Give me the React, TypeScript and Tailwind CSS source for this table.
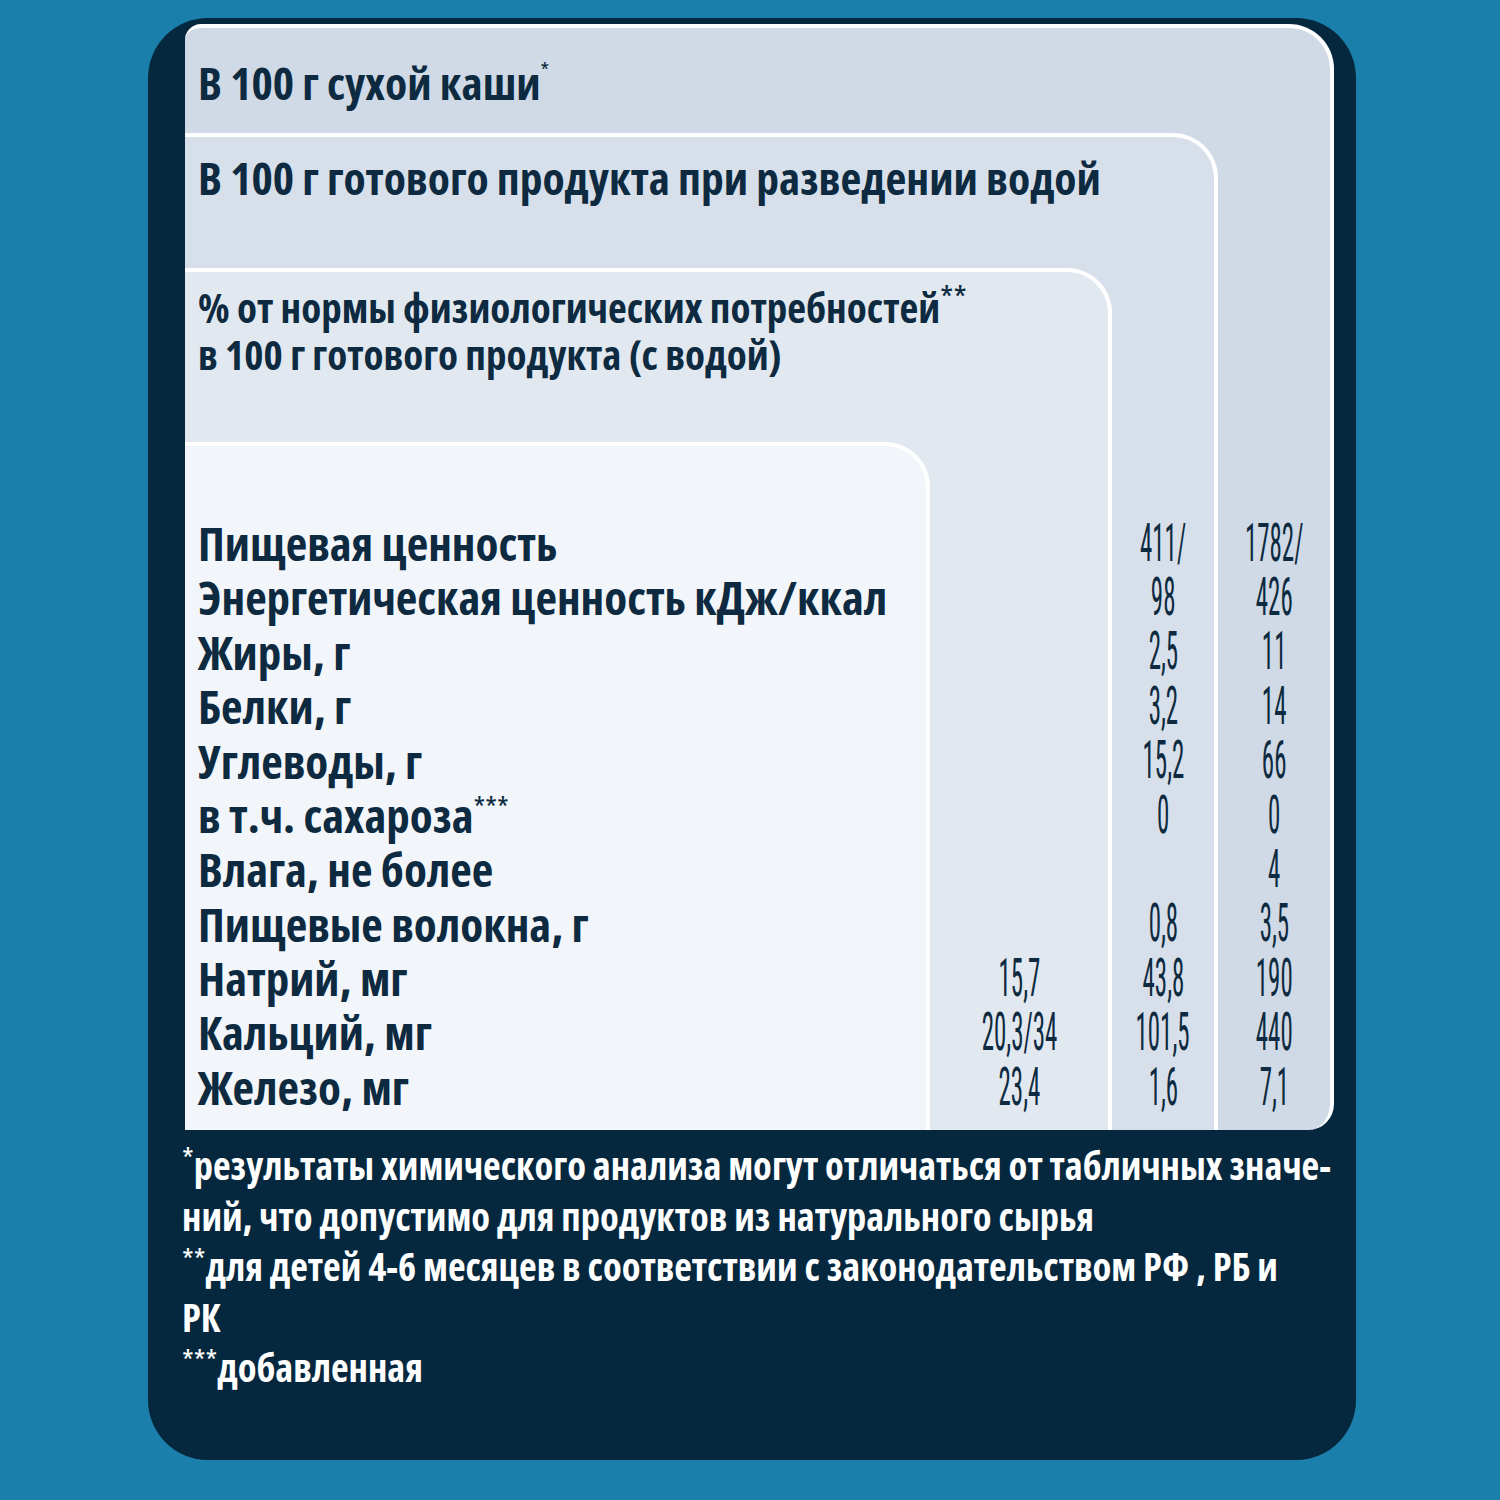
import React from 'react';

type Row = { label: React.ReactNode; pct: string; ready: string; dry: string };

const rows: Row[] = [
  { label: 'Пищевая ценность', pct: '', ready: '411/', dry: '1782/' },
  { label: 'Энергетическая ценность кДж/ккал', pct: '', ready: '98', dry: '426' },
  { label: 'Жиры, г', pct: '', ready: '2,5', dry: '11' },
  { label: 'Белки, г', pct: '', ready: '3,2', dry: '14' },
  { label: 'Углеводы, г', pct: '', ready: '15,2', dry: '66' },
  {
    label: (
      <>
        в т.ч. сахароза<sup className="text-[30px] font-normal top-[-14px]">***</sup>
      </>
    ),
    pct: '',
    ready: '0',
    dry: '0',
  },
  { label: 'Влага, не более', pct: '', ready: '', dry: '4' },
  { label: 'Пищевые волокна, г', pct: '', ready: '0,8', dry: '3,5' },
  { label: 'Натрий, мг', pct: '15,7', ready: '43,8', dry: '190' },
  { label: 'Кальций, мг', pct: '20,3/34', ready: '101,5', dry: '440' },
  { label: 'Железо, мг', pct: '23,4', ready: '1,6', dry: '7,1' },
];

const cond = "font-['Open_Sans',sans-serif] font-stretch-condensed";
const digits = "font-['Roboto',sans-serif] font-stretch-condensed";

// values are aligned to the bottom, where all panels end together
function ValueColumn({ values, width }: { values: string[]; width: string }) {
  return (
    <div className={`${width} shrink-0 flex flex-col justify-end pb-[16px] ${digits}`}>
      {values.map((v, i) => (
        <div key={i} className="h-[54.4px] flex items-center justify-center text-[53px] font-normal leading-none text-[#0d2a40]">
          <span className="inline-block scale-x-[0.47]">{v || '\u00a0'}</span>
        </div>
      ))}
    </div>
  );
}

export default function App() {
  return (
    <div className={`w-[1500px] h-[1500px] bg-[#1a80ab] pt-[18px] pl-[148px] ${cond}`}>
      <div className="w-[1208px] h-[1442px] bg-[#05283f] rounded-[60px] pt-[6px] pl-[37px] pr-[22px] flex flex-col">
        {/* dry product panel */}
        <div className="bg-[#cfdae6] border-t-4 border-r-4 border-white rounded-tl-[16px] rounded-tr-[45px] rounded-br-[26px] flex flex-col overflow-hidden">
          <div className="h-[105px] pl-[13px] pt-[29px] text-[45.5px] leading-[50px] font-bold text-[#0d2a40] whitespace-nowrap">
            В 100 г сухой каши<sup className="text-[22px] font-normal top-[-22px]">*</sup>
          </div>
          <div className="flex">
            {/* ready product panel */}
            <div className="w-[1033px] bg-[#d7e0ea] border-t-4 border-r-4 border-white rounded-tr-[45px] flex flex-col">
              <div className="h-[131px] pl-[13px] pt-[15px] text-[45.5px] leading-[50px] font-bold text-[#0d2a40] whitespace-nowrap">
                В 100 г готового продукта при разведении водой
              </div>
              <div className="flex">
                {/* percent panel */}
                <div className="w-[927px] bg-[#e1e8f0] border-t-4 border-r-4 border-white rounded-tr-[45px] flex flex-col">
                  <div className="h-[170px] pl-[13px] pt-[12px] text-[41px] leading-[47px] font-bold text-[#0d2a40] whitespace-nowrap">
                    <div>
                      % от нормы физиологических потребностей
                      <sup className="text-[34px] font-normal top-[-12px]">**</sup>
                    </div>
                    <div>в 100 г готового продукта (с водой)</div>
                  </div>
                  <div className="flex">
                    {/* labels panel */}
                    <div className="w-[745px] bg-[#f2f5f9] border-t-4 border-r-4 border-white rounded-tr-[45px] pt-[70px] pb-[16px] pl-[13px]">
                      {rows.map((r, i) => (
                        <div key={i} className="h-[54.4px] flex items-center text-[47px] font-bold text-[#0d2a40] whitespace-nowrap">
                          <span>{r.label}</span>
                        </div>
                      ))}
                    </div>
                    <ValueColumn width="w-[178px]" values={rows.map((r) => r.pct)} />
                  </div>
                </div>
                <ValueColumn width="w-[102px]" values={rows.map((r) => r.ready)} />
              </div>
            </div>
            <ValueColumn width="w-[112px]" values={rows.map((r) => r.dry)} />
          </div>
        </div>

        {/* footnotes */}
        <div className="pt-[10px] -ml-[3px] text-white text-[38.5px] font-bold leading-[50.5px] whitespace-nowrap">
          <div>
            <sup className="text-[30px] font-normal top-[-10px]">*</sup>результаты химического анализа могут отличаться от табличных значе-
          </div>
          <div>ний, что допустимо для продуктов из натурального сырья</div>
          <div>
            <sup className="text-[30px] font-normal top-[-10px]">**</sup>для детей 4-6 месяцев в соответствии с законодательством РФ , РБ и
          </div>
          <div>РК</div>
          <div>
            <sup className="text-[30px] font-normal top-[-10px]">***</sup>добавленная
          </div>
        </div>
      </div>
    </div>
  );
}
